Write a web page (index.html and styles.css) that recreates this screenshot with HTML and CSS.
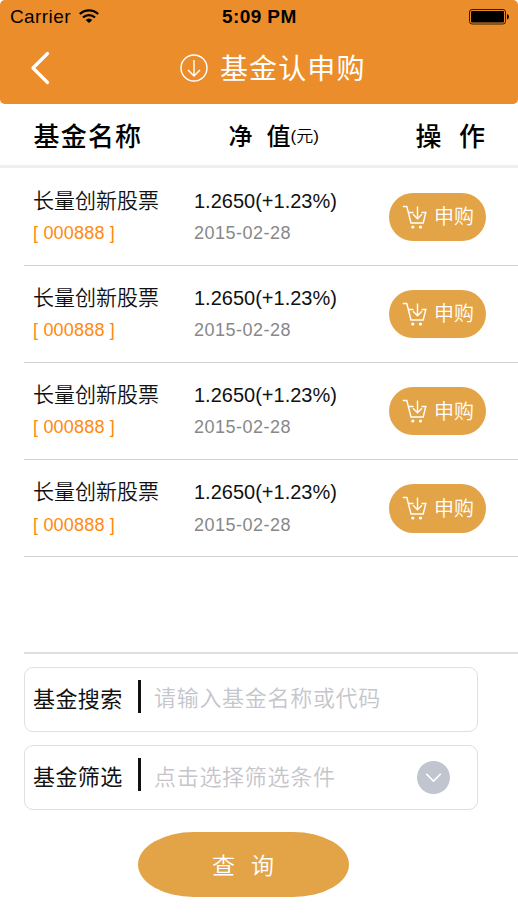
FILE: index.html
```
<!DOCTYPE html>
<html lang="zh-CN">
<head>
<meta charset="utf-8">
<title>基金认申购</title>
<link rel="stylesheet" href="styles.css">
</head>
<body>
<svg class="defs" aria-hidden="true">
  <symbol id="cart" viewBox="0 0 26 25">
    <path d="M.8 1.500h4l4.200 16.500h12.200l2.600-10.500h-4.300M6.500 7.500h5M15.500 1.500v12M11 9.300l4.500 4.500 4.500-4.500" fill="none" stroke="currentColor" stroke-width="1.400"/>
    <circle cx="10.800" cy="22" r="1.600" fill="currentColor"/>
    <circle cx="18.500" cy="22" r="1.600" fill="currentColor"/>
  </symbol>
</svg>
<header class="top">
  <div class="status">
    <span class="carrier">Carrier</span>
    <svg class="wifi" viewBox="0 0 20 14"><g fill="none" stroke="#000" stroke-width="2.300"><path d="M.8 5a13.300 13.300 0 0 1 18.400 0"/><path d="M4 8.500a8.700 8.700 0 0 1 12 0"/></g><path d="M6.700 11a4.800 4.800 0 0 1 6.600 0L10 14z"/></svg>
    <span class="time">5:09 PM</span>
    <svg class="battery" viewBox="0 0 40 16"><rect x=".5" y=".5" width="36" height="14.500" rx="2.500" fill="none" stroke="#000" stroke-opacity=".8"/><rect x="2" y="2" width="33" height="11.500" rx="1"/><path d="M38 5q2 .5 2 2.700T38 10.500z"/></svg>
  </div>
  <div class="nav">
    <svg class="back" viewBox="0 0 20 34"><path d="M17.500 2.500L3 17l14.500 14.500" fill="none" stroke="#fff" stroke-width="3.200" stroke-linecap="round" stroke-linejoin="round"/></svg>
    <svg class="down" viewBox="0 0 28 28"><g fill="none" stroke="#fff" stroke-width="1.400"><circle cx="14" cy="14" r="13"/><path d="M14 6v16M8 16l6 6 6-6"/></g></svg>
    <h1>基金认申购</h1>
  </div>
</header>
<div class="thead">
  <span class="h-name">基金名称</span>
  <span class="h-value"><b>净</b><b>值</b><small>(元)</small></span>
  <span class="h-op"><b>操</b><b>作</b></span>
</div>
<main class="list">
  <div class="row"><div class="name"><p>长量创新股票</p><p class="code">[ 000888 ]</p></div><div class="value"><p>1.2650(+1.23%)</p><p class="date">2015-02-28</p></div><button class="buy"><svg><use href="#cart"/></svg><span>申购</span></button></div>
  <div class="row"><div class="name"><p>长量创新股票</p><p class="code">[ 000888 ]</p></div><div class="value"><p>1.2650(+1.23%)</p><p class="date">2015-02-28</p></div><button class="buy"><svg><use href="#cart"/></svg><span>申购</span></button></div>
  <div class="row"><div class="name"><p>长量创新股票</p><p class="code">[ 000888 ]</p></div><div class="value"><p>1.2650(+1.23%)</p><p class="date">2015-02-28</p></div><button class="buy"><svg><use href="#cart"/></svg><span>申购</span></button></div>
  <div class="row"><div class="name"><p>长量创新股票</p><p class="code">[ 000888 ]</p></div><div class="value"><p>1.2650(+1.23%)</p><p class="date">2015-02-28</p></div><button class="buy"><svg><use href="#cart"/></svg><span>申购</span></button></div>
  <div class="row empty"></div>
</main>
<section class="form">
  <div class="field search"><span class="label">基金搜索</span><i class="bar"></i><span class="hint">请输入基金名称或代码</span></div>
  <div class="field"><span class="label">基金筛选</span><i class="bar"></i><span class="hint">点击选择筛选条件</span>
    <svg class="drop" viewBox="0 0 32 32"><circle cx="16" cy="16" r="16" fill="#c1c5cf"/><path d="M9 12.500l7 7 7-7" fill="none" stroke="#fff" stroke-width="1.500"/></svg>
  </div>
  <button class="query"><span>查</span><span>询</span></button>
</section>
</body>
</html>
```
FILE: styles.css
```
* { box-sizing: border-box; }
body {
  margin: 0;
  width: 518px;
  height: 920px;
  overflow: hidden;
  background: #fff;
  color: #111;
  font-family: "Liberation Sans", "Noto Sans CJK SC", sans-serif;
}
p, h1 { margin: 0; }
svg { display: block; flex: none; }
button { border: 0; padding: 0; font-family: inherit; color: #fff; background: #e3a447; }
.defs { position: absolute; width: 0; height: 0; }

.top { height: 103.500px; background: #ec8d2c; border-bottom: 1px solid #f68a1e; border-radius: 5px; }
.status { display: flex; height: 33px; padding: 0 9px 0 10px; color: #000; line-height: 33px; }
.carrier { width: 69px; font-size: 19px; letter-spacing: .4px; }
.wifi { width: 20px; height: 14px; margin-top: 9px; }
.time { margin-left: 123px; font-size: 19px; font-weight: 700; letter-spacing: .4px; white-space: nowrap; }
.battery { width: 40px; height: 16px; margin: 9px 0 0 auto; }
.nav { display: flex; align-items: center; height: 70px; padding-left: 30px; }
.back { width: 20px; height: 34px; }
.down { width: 28px; height: 28px; margin-left: 130px; }
.nav h1 { margin: 4px 0 0 12px; color: #fff; font-size: 28px; line-height: 40px; font-weight: 400; letter-spacing: 1.100px; }

.thead { display: flex; align-items: center; height: 64.500px; padding: 1px 0 0 33.500px; border-bottom: 3px solid #efeff3; color: #000; }
.thead span { display: flex; align-items: center; }
.thead b { font-weight: 500; }
.h-name { width: 195px; font-size: 26px; font-weight: 500; letter-spacing: 1.200px; }
.h-value { width: 187px; font-size: 24px; }
.h-value b + b { margin-left: 14px; }
.h-value small { font-size: 17px; font-weight: 350; }
.h-op { gap: 17.500px; font-size: 26px; }

.list { padding-top: .5px; }
.row { display: flex; height: 97.200px; margin-left: 24px; padding-left: 9px; border-bottom: 1.500px solid #d2d3d7; }
.name { width: 161px; padding-top: 17px; }
.name p { font-size: 21px; line-height: 30px; font-weight: 350; }
.name .code { margin-top: 2.500px; color: #ff8a0c; font-size: 18px; font-weight: 400; letter-spacing: .2px; }
.value { width: 195px; padding-top: 17px; }
.value p { font-size: 20px; line-height: 30px; }
.value .date { margin-top: 2.500px; color: #888; font-size: 18px; letter-spacing: .5px; }
.buy { display: flex; align-items: center; width: 97px; height: 48.500px; margin-top: 24px; padding-left: 13px; border-radius: 25px; font-size: 20px; font-weight: 350; }
.buy svg { width: 26px; height: 25px; margin: 1px 6px 0 0; }
.buy span { margin-bottom: 2px; }
.empty { border-bottom: 2px solid #dedede; }

.form { display: flex; flex-direction: column; padding: 12.500px 40px 0 24px; }
.field { display: flex; align-items: center; height: 65px; margin-bottom: 13px; padding-left: 8px; border: 1px solid #dcdfe3; border-radius: 9px; }
.label { width: 105px; margin-bottom: 4px; font-size: 22px; letter-spacing: .4px; }
.bar { width: 3px; height: 33px; margin-bottom: 5px; background: #111; }
.hint { margin: 0 0 4px 13px; color: #c5c5cb; font-size: 22px; font-weight: 350; letter-spacing: .7px; }
.search .hint { margin-bottom: 7px; }
.drop { width: 33px; height: 33px; margin: 0 27px 0 auto; }
.query { display: flex; align-items: center; justify-content: center; gap: 16px; align-self: center; width: 211px; height: 65px; margin: 9px 0 0 -16px; padding-bottom: 1px; border-radius: 56px / 32.500px; font-size: 23px; font-weight: 350; }
```
